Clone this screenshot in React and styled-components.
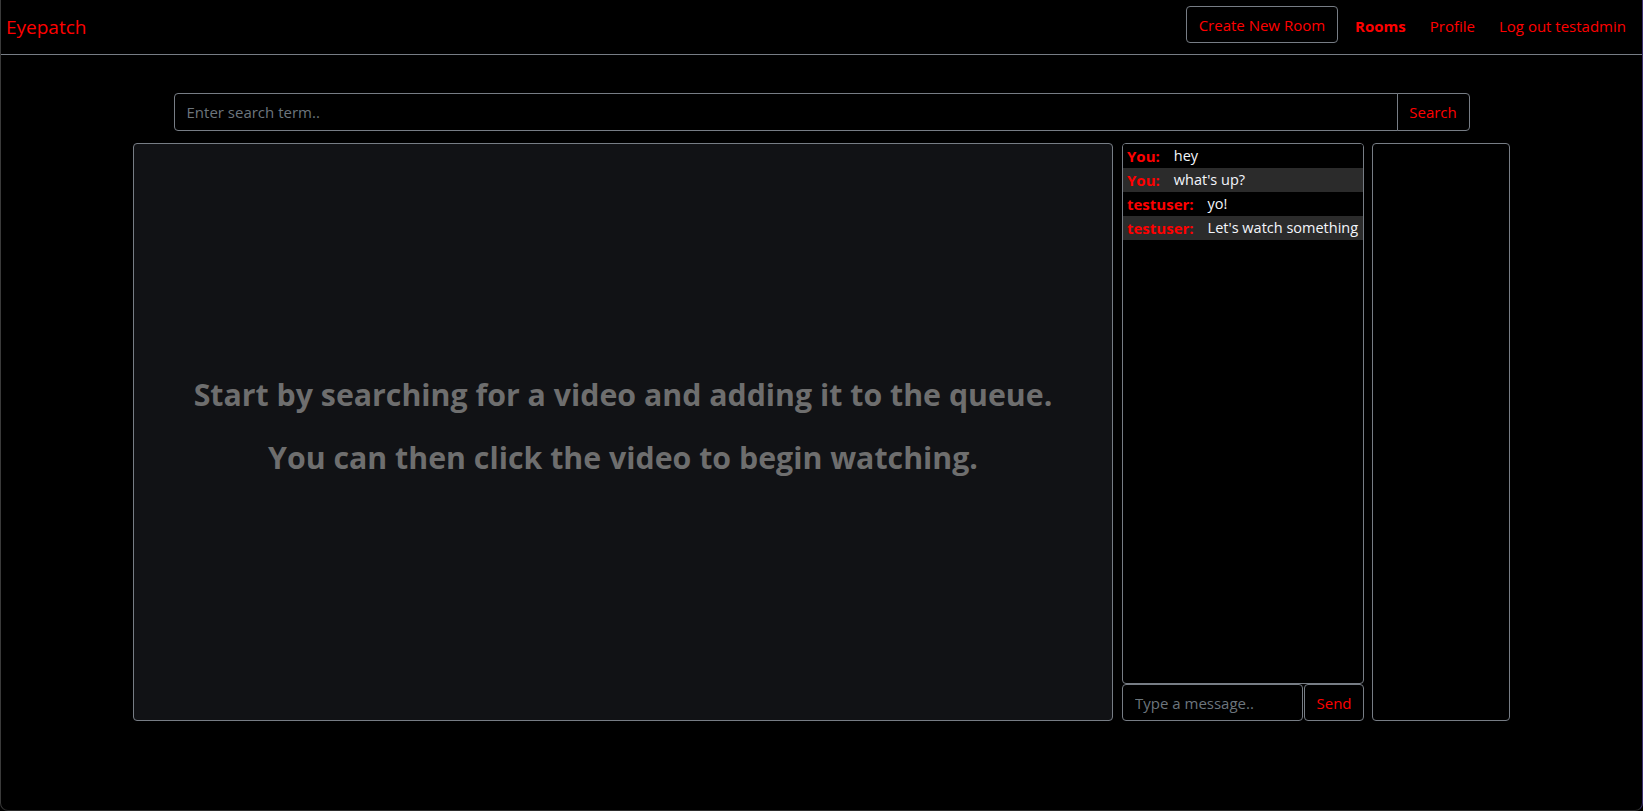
import React from "react";
import styled, { createGlobalStyle } from "styled-components";

const GlobalStyle = createGlobalStyle`
  html, body {
    margin: 0;
    padding: 0;
    background: #000;
  }
  body {
    font-family: "Open Sans", "Noto Sans", sans-serif;
    font-size: 16px;
    line-height: 1.5;
    color: #fff;
  }
  *, *::before, *::after { box-sizing: border-box; }
`;

const Frame = styled.div`
  height: 100vh;
  border-left: 1px solid #3a3a3a;
  border-right: 1px solid #3b2f6e;
  border-bottom: 1px solid #2c2c2c;
  border-bottom-left-radius: 8px;
  border-bottom-right-radius: 8px;
  overflow: hidden;
`;

const NavBar = styled.nav`
  height: 55px;
  display: flex;
  align-items: center;
  justify-content: space-between;
  padding: 0 16px 0 5px;
  border-bottom: 1px solid #777d85;
`;

const Brand = styled.a`
  color: #ff0000;
  font-size: 19px;
  text-decoration: none;
  margin-top: 0;
`;

const NavRight = styled.div`
  display: flex;
  align-items: center;
  margin-top: -5px;
`;

const OutlineButton = styled.button`
  font-family: inherit;
  font-size: 15px;
  line-height: 1.5;
  color: #ff0000;
  background: transparent;
  border: 1px solid #777d85;
  border-radius: 4px;
  height: 37px;
  padding: 2px 12px 0;
  margin-right: 17px;
`;

const NavLink = styled.a`
  color: #ff0000;
  font-size: 15px;
  font-weight: ${(p) => (p.$active ? 700 : 400)};
  text-decoration: none;
  margin-top: 4px;
  margin-left: ${(p) => (p.$first ? "0" : "24px")};
`;

const Main = styled.main`
  padding-top: 38px;
  display: flex;
  flex-direction: column;
  align-items: center;
`;

const SearchRow = styled.form`
  width: 1296px;
  display: flex;
`;

const TextInput = styled.input`
  font-family: inherit;
  font-size: 15px;
  height: 38px;
  background: #000;
  color: #fff;
  border: 1px solid #777d85;
  border-radius: ${(p) => (p.$joined ? "4px 0 0 4px" : "4px")};
  padding: 0 12px;
  flex: 1;
  min-width: 0;
  outline: none;
  &::placeholder {
    color: #6c757d;
  }
`;

const GroupButton = styled.button`
  font-family: inherit;
  font-size: 15px;
  color: #ff0000;
  background: #000;
  border: 1px solid #777d85;
  border-radius: ${(p) => (p.$joined ? "0 4px 4px 0" : "4px")};
  margin-left: ${(p) => (p.$joined ? "-1px" : "1px")};
  width: ${(p) => p.$w}px;
  height: 38px;
  padding: 0;
`;

const Row = styled.div`
  margin-top: 12px;
  width: 1377px;
  height: 578px;
  display: flex;
`;

const Player = styled.section`
  width: 980px;
  height: 100%;
  background: #111215;
  border: 1px solid #777d85;
  border-radius: 4px;
  display: flex;
  flex-direction: column;
  align-items: center;
  justify-content: center;
  gap: 15px;
`;

const Hint = styled.h3`
  margin: 0 0 11px;
  font-size: 30.3px;
  font-weight: 700;
  line-height: 1.2;
  color: #6e6e6e;
  text-align: center;
  white-space: nowrap;
`;

const ChatColumn = styled.section`
  width: 242px;
  margin: 0 8px 0 9px;
  display: flex;
  flex-direction: column;
`;

const Messages = styled.div`
  flex: 1;
  border: 1px solid #777d85;
  border-radius: 4px;
  background: #000;
  overflow: hidden;
`;

const Message = styled.div`
  display: flex;
  height: 24px;
  line-height: 24px;
  padding: 0 4px;
  font-size: 15px;
  background: ${(p) => (p.$alt ? "#2b2b2b" : "#000")};
  white-space: nowrap;
`;

const Author = styled.span`
  color: #ff0000;
  font-weight: 700;
  margin-right: 14px;
`;

const Body = styled.span`
  color: #f4f6fb;
  font-size: 14.5px;
`;

const ChatForm = styled.form`
  height: 37px;
  display: flex;
`;

const ChatInput = styled(TextInput)`
  height: 37px;
`;

const ChatSend = styled(GroupButton)`
  height: 37px;
`;

const Queue = styled.aside`
  width: 138px;
  height: 100%;
  border: 1px solid #777d85;
  border-radius: 4px;
  background: #000;
`;

const messages = [
  { author: "You:", text: "hey" },
  { author: "You:", text: "what's up?" },
  { author: "testuser:", text: "yo!" },
  { author: "testuser:", text: "Let's watch something" },
];

export default function App() {
  return (
    <>
      <GlobalStyle />
      <Frame>
        <NavBar>
          <Brand href="#">Eyepatch</Brand>
          <NavRight>
            <OutlineButton type="button">Create New Room</OutlineButton>
            <NavLink href="#" $active $first>
              Rooms
            </NavLink>
            <NavLink href="#">Profile</NavLink>
            <NavLink href="#">Log out testadmin</NavLink>
          </NavRight>
        </NavBar>
        <Main>
          <SearchRow onSubmit={(e) => e.preventDefault()}>
            <TextInput $joined placeholder="Enter search term.." />
            <GroupButton $joined $w={73} type="submit">
              Search
            </GroupButton>
          </SearchRow>
          <Row>
            <Player>
              <Hint>Start by searching for a video and adding it to the queue.</Hint>
              <Hint>You can then click the video to begin watching.</Hint>
            </Player>
            <ChatColumn>
              <Messages>
                {messages.map((m, i) => (
                  <Message key={i} $alt={i % 2 === 1}>
                    <Author>{m.author}</Author>
                    <Body>{m.text}</Body>
                  </Message>
                ))}
              </Messages>
              <ChatForm onSubmit={(e) => e.preventDefault()}>
                <ChatInput placeholder="Type a message.." />
                <ChatSend $w={60} type="submit">
                  Send
                </ChatSend>
              </ChatForm>
            </ChatColumn>
            <Queue />
          </Row>
        </Main>
      </Frame>
    </>
  );
}
